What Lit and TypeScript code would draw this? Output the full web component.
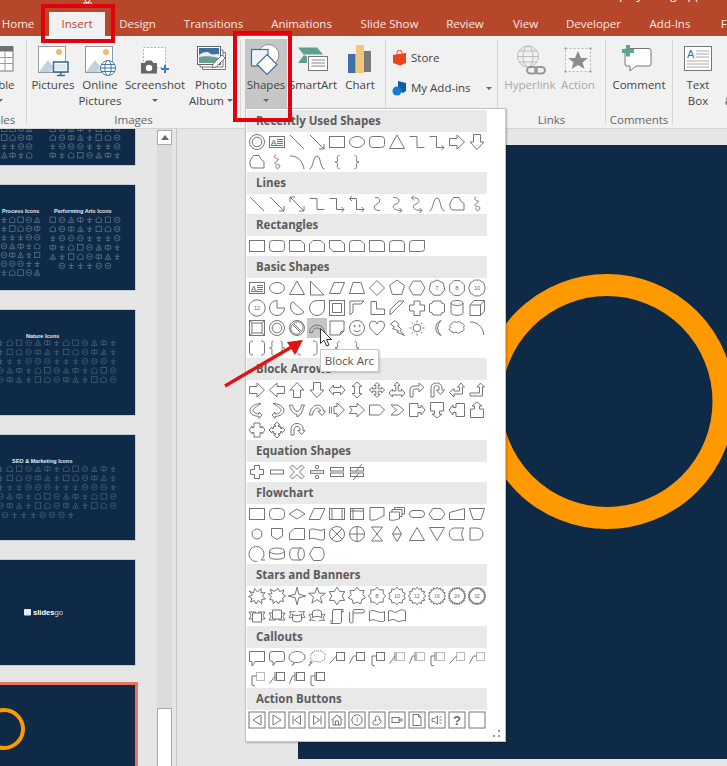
import { LitElement, html, svg, css } from "lit";
import { customElement } from "lit/decorators.js";
import { unsafeSVG } from "lit/directives/unsafe-svg.js";

const p = (d: string) => `<path d="${d}"/>`;
const c = (x: number, y: number, r: number) => `<circle cx="${x}" cy="${y}" r="${r}"/>`;
const R = (x: number, y: number, w: number, h: number, rx = 0) => `<rect x="${x}" y="${y}" width="${w}" height="${h}" rx="${rx}"/>`;
const E = (x: number, y: number, rx: number, ry: number) => `<ellipse cx="${x}" cy="${y}" rx="${rx}" ry="${ry}"/>`;
const rot = (s: string, a: number) => `<g transform="rotate(${a} 10 10)">${s}</g>`;
const fh = (s: string) => `<g transform="translate(20 0) scale(-1 1)">${s}</g>`;
const fv = (s: string) => `<g transform="translate(0 20) scale(1 -1)">${s}</g>`;
const t = (s: string, size = 6, y = 12.2) => `<text class="n" x="10" y="${y}" font-size="${size}">${s}</text>`;
const dash = (s: string) => `<g class="dash">${s}</g>`;
const pts = (n: number, r: number, off = -90, cx = 10, cy = 10) => {
  const a: string[] = [];
  for (let i = 0; i < n; i++) {
    const th = ((off + (360 * i) / n) * Math.PI) / 180;
    a.push(`${(cx + r * Math.cos(th)).toFixed(2)} ${(cy + r * Math.sin(th)).toFixed(2)}`);
  }
  return a;
};
const gon = (n: number, r: number, off = -90) => `<polygon points="${pts(n, r, off).join(" ")}"/>`;
const star = (n: number, ro: number, ri: number) => {
  const o = pts(n, ro);
  const i = pts(n, ri, -90 + 180 / n);
  return `<polygon points="${o.map((v, k) => `${v} ${i[k]}`).join(" ")}"/>`;
};

const donut = c(10, 10, 7.5) + c(10, 10, 4.8);
const textbox = R(2.5, 4.5, 15, 11) + `<text class="b" x="4" y="12.5" font-size="8">A</text>` + p("M10 7.5H16M10 9.5H16M10 11.5H16M4 13.5H16");
const line = p("M3 3L17 17");
const arrow = p("M3 3L17 17M17 12V17H12");
const dblArrow = p("M3 3L17 17M17 12V17H12M3 8V3H8");
const rect = R(2.5, 4.5, 15, 11);
const ell = E(10, 10, 7.5, 5.5);
const rnd = R(2.5, 4.5, 15, 11, 3);
const tri = p("M10 3L17.5 16.5H2.5Z");
const elbow = p("M2.5 4.5H10V15.5H17.5");
const elbowA = p("M2.5 4.5H9.5V15.5H17M14.5 13L17 15.5L14.5 18");
const elbowD = p("M5 2L2.5 4.5L5 7M2.5 4.5H9.5V15.5H17M14.5 13L17 15.5L14.5 18");
const arR = p("M2.5 6.5H10V3L17.5 10L10 17V13.5H2.5Z");
const arL = fh(arR);
const arU = rot(arR, -90);
const arD = rot(arR, 90);
const free = p("M3 9L6.5 3.5H12Q13.5 8 17 9.5V16H6Q2.5 16 3 9Z");
const scrib = p("M9 3C6 4 8 6.5 11 7S6.5 10 8 11.5 14.5 12 12.5 15 9 17 9 13.5");
const arc = p("M3 4C10 3.5 16 9 17 17");
const curve = p("M2.5 17C6 17 6 4 10 4S13 17 17.5 17");
const lbr = p("M12.5 3.5C9.5 3.5 10.5 6 10.5 8S9.5 10 8 10C9.5 10 10.5 10.5 10.5 12.5S9.5 16.5 12.5 16.5");
const rbr = fh(lbr);
const curveC = p("M8 3.5C14 3 14 8 10 10S6 16.5 13 16.5");
const curveA = p("M6 3.5C13 3 14 8 9 10S6 16.5 14.5 16.5M12.5 14L15 16.5L12.5 19");
const curveD = p("M7 1.5L4.5 4L7 6.5M4.5 4C13 3 14 8 9 10S6 16.5 14.5 16.5M12.5 14L15 16.5L12.5 19");

const snip1 = p("M2.5 4.5H14L17.5 8V15.5H2.5Z");
const snip2 = p("M6 4.5H14L17.5 8V15.5H2.5V8Z");
const snipD = p("M2.5 4.5H14L17.5 8V15.5H6L2.5 12Z");
const snipR = p("M5.5 4.5H14L17.5 8V15.5H2.5V7.5Q2.5 4.5 5.5 4.5Z");
const rnd1 = p("M2.5 4.5H14Q17.5 4.5 17.5 8V15.5H2.5Z");
const rnd2 = p("M6 4.5H14Q17.5 4.5 17.5 8V15.5H2.5V8Q2.5 4.5 6 4.5Z");
const rndD = p("M5.5 4.5H17.5V12.5Q17.5 15.5 14.5 15.5H2.5V7.5Q2.5 4.5 5.5 4.5Z");

const rtri = p("M3.5 3V17H17Z");
const para = p("M7 4.5H17.5L13 15.5H2.5Z");
const trap = p("M6 4.5H14L17.5 15.5H2.5Z");
const dia = p("M10 2.5L17.5 10L10 17.5L2.5 10Z");
const pie = p("M10 2.5A7.5 7.5 0 1 0 17.5 10H10Z");
const chord = p("M5.5 3.5A7.5 7.5 0 1 0 17 14Z");
const tear = p("M17.5 2.5H10A7.5 7.5 0 1 0 17.5 10Z");
const frame = R(2.5, 2.5, 15, 15) + R(5.5, 5.5, 9, 9);
const half = p("M3 3H17L14 6H6V14L3 17Z");
const lsh = p("M4 3.5H9.5V11H17.5V16.5H4Z");
const diag = p("M3 17V12L12 3H17Z");
const plus = p("M7 3H13V7H17.5V13H13V17.5H7V13H2.5V7H7Z");
const plaque = p("M6 3H14Q14 6 17.5 6V14Q14 14 14 17H6Q6 14 2.5 14V6Q6 6 6 3Z");
const can = p("M4 5V15C4 18 16 18 16 15V5") + E(10, 5, 6, 2.5);
const cube = p("M3 7H13.5V17.5H3ZM3 7L7 2.5H17.5V13L13.5 17.5M13.5 7L17.5 2.5");
const bevel = R(2.5, 2.5, 15, 15) + R(5, 5, 10, 10) + p("M2.5 2.5L5 5M17.5 2.5L15 5M2.5 17.5L5 15M17.5 17.5L15 15");
const noSym = c(10, 10, 7.5) + p("M6.5 5.5L14.5 13.5A5 5 0 0 0 6.5 5.5ZM5.5 6.5L13.5 14.5A5 5 0 0 1 5.5 6.5Z");
const bArc = p("M2.5 14.5A7.5 7.5 0 0 1 17.5 14.5H14.5A4.5 4.5 0 0 0 5.5 14.5Z");
const fold = p("M3 3H17V13L13 17H3ZM13 17L14 13.5L17 13");
const smile = c(10, 10, 7.5) + c(7.5, 8, 0.7) + c(12.5, 8, 0.7) + p("M6.5 12Q10 15.5 13.5 12");
const heart = p("M10 17C4 12 2.5 9.5 2.5 7A3.8 3.8 0 0 1 10 6A3.8 3.8 0 0 1 17.5 7C17.5 9.5 16 12 10 17Z");
const bolt = p("M8 2.5L12 6.5L10.5 7.5L14.5 11.5L13 12.5L17.5 17.5L10 14L11.5 13L5.5 10.5L7.5 9L3.5 6Z");
const sun = c(10, 10, 3.8) + p("M10 2.5V4.5M10 15.5V17.5M2.5 10H4.5M15.5 10H17.5M4.7 4.7L6.1 6.1M13.9 13.9L15.3 15.3M4.7 15.3L6.1 13.9M13.9 6.1L15.3 4.7");
const moon = p("M14 2.5A8 8 0 0 0 14 17.5A10 10 0 0 1 14 2.5Z");
const cloud = p("M5 6C5 4 8 3 9.5 4.5C11 3 14 3.5 14.5 5.5C17 5.5 18 8 16.5 9.5C18 11.5 16 14 14 13.5C13 15.5 10 15.5 9 14C7 15.5 4.5 14.5 4.5 13C2 13 1.5 10 3.5 9.5C2 8 3 6 5 6Z");
const dblBk = p("M6 3C3.5 3 2.5 4 2.5 6V14C2.5 16 3.5 17 6 17M14 3C16.5 3 17.5 4 17.5 6V14C17.5 16 16.5 17 14 17");
const dblBr = p("M6.5 3C4 3 5 6 5 8S4 10 2.5 10C4 10 5 10.5 5 12.5S4 17 6.5 17M13.5 3C16 3 15 6 15 8S16 10 17.5 10C16 10 15 10.5 15 12.5S16 17 13.5 17");
const lBk = p("M14 3C10 3 10 5 10 7V13C10 15 10 17 14 17");
const rBk = fh(lBk);

const arLR = p("M2 10L6.5 5V7.5H13.5V5L18 10L13.5 15V12.5H6.5V15Z");
const arUD = rot(arLR, 90);
const quad = p("M10 2.5L13 5.5H11.2V8.8H14.5V7L17.5 10L14.5 13V11.2H11.2V14.5H13L10 17.5L7 14.5H8.8V11.2H5.5V13L2.5 10L5.5 7V8.8H8.8V5.5H7Z");
const lru = p("M10 2L13 5.5H11.2V11H14.5V9L18 13L14.5 17V15H5.5V17L2 13L5.5 9V11H8.8V5.5H7Z");
const bent = p("M3 17V10C3 7 5 6 8 6H12V3L17 7.5L12 12V9H8C6.5 9 6 10 6 11V17Z");
const uturn = p("M4 17V8C4 4.5 6.5 3 9.5 3S15 4.5 15 8V10H17.5L13.5 14.5L9.5 10H12V8C12 6 11 5.7 9.5 5.7S7 6 7 8V17Z");
const leftUp = p("M14 3L17.5 7H15.5V14H7V17L2.5 12.5L7 8.5V11H12.5V7H10.5Z");
const bentUp = p("M13.5 3L17.5 7H15.5V16H3V13H12.5V7H10Z");
const curR = p("M14 3.5C8 3.5 3 7 3 10.5S7 16 12 16.5V18.5L15 15L12 12V14C9 14 6 12.5 6 10.5S9 6.5 14 3.5Z");
const curUp = p("M2.5 5C3 11 7 14 10 14.5V17L14 14L17.5 5H14.5C14 9 12 11 10 11.5C7.5 10.5 6 8 5.5 5Z");
const curDn = p("M2.5 15C3 9 7 5 10.5 5S16 8 16.5 11H18.5L15 15.5L11 11H13.5C13 9 12 8 10.5 8S6 10 5.5 15Z");
const stripe = p("M2.5 6.5V13.5M4.5 6.5V13.5M7 6.5H10V3L17.5 10L10 17V13.5H7Z");
const notch = p("M2.5 6.5H10V3L17.5 10L10 17V13.5H2.5L5 10Z");
const home = p("M2.5 5H12.5L17.5 10L12.5 15H2.5Z");
const chev = p("M4 5H11L17 10L11 15H4L9.5 10Z");
const calR = p("M2.5 3.5H11V7.5H14V5L18 10L14 15V12.5H11V16.5H2.5Z");
const calD = rot(calR, 90);
const calL = fh(calR);
const calU = rot(calR, -90);
const calLR = p("M7 3H13V7.5H15V6L18 10L15 14V12.5H13V17H7V12.5H5V14L2 10L5 6V7.5H7Z");
const calQ = p("M10 2L13 5H11.5V6.5H13.5V8.5H15V7L18 10L15 13V11.5H13.5V13.5H11.5V15H13L10 18L7 15H8.5V13.5H6.5V11.5H5V13L2 10L5 7V8.5H6.5V6.5H8.5V5H7Z");
const circ = p("M4 15V10C4 5.5 7 3.5 10 3.5S16 5.5 16 9V10.5H18L14.5 14.5L11 10.5H13V9C13 7.5 11.5 6.5 10 6.5S7 7.5 7 10V15Z");

const eqPlus = p("M7.5 3.5H12.5V7.5H16.5V12.5H12.5V16.5H7.5V12.5H3.5V7.5H7.5Z");
const eqMin = R(3.5, 8, 13, 4);
const eqMul = p("M5.5 3L10 7.5L14.5 3L17 5.5L12.5 10L17 14.5L14.5 17L10 12.5L5.5 17L3 14.5L7.5 10L3 5.5Z");
const eqDiv = c(10, 5, 1.7) + c(10, 15, 1.7) + R(3.5, 8.7, 13, 2.6);
const eqEq = R(3.5, 5.5, 13, 3.5) + R(3.5, 11, 13, 3.5);
const eqNe = R(3.5, 5.5, 13, 3.5) + R(3.5, 11, 13, 3.5) + p("M6 18L12 11M9 9L15 2");

const fProc = R(2.5, 4.5, 15, 11);
const fAlt = R(2.5, 4.5, 15, 11, 4);
const fDec = p("M10 5L18 10L10 15L2 10Z");
const fData = p("M7 4.5H18L13 15.5H2Z");
const fPre = R(2.5, 4.5, 15, 11) + p("M5 4.5V15.5M15 4.5V15.5");
const fInt = R(3.5, 4.5, 13, 11) + p("M6 4.5V15.5M3.5 7H16.5");
const fDoc = p("M3 3.5H17V12C13 12 12 17 3 16Z");
const fMul = p("M2.5 8H12.5V15C9 15 8 17 2.5 16ZM5 8V5.5H15V12.5H12.5M7.5 5.5V3.5H17.5V10H15");
const fTerm = R(2.5, 6.5, 15, 7, 3.5);
const fPrep = p("M6 4.5H14L18 10L14 15.5H6L2 10Z");
const fMan = p("M2.5 8.5L17.5 4.5V15.5H2.5Z");
const fOp = p("M2.5 4.5H17.5L14 15.5H6Z");
const fCon = c(10, 10, 5);
const fOff = p("M4.5 4.5H15.5V12L10 15.5L4.5 12Z");
const fCard = p("M7 4.5H17.5V15.5H2.5V9Z");
const fTape = p("M2.5 6C7 2.5 13 9 17.5 5V15C13 18.5 7 12 2.5 15Z");
const fSum = c(10, 10, 7.5) + p("M4.7 4.7L15.3 15.3M15.3 4.7L4.7 15.3");
const fOr = c(10, 10, 7.5) + p("M10 2.5V17.5M2.5 10H17.5");
const fCol = p("M4.5 3H15.5L4.5 17H15.5Z");
const fSort = p("M10 2.5L14.5 10L10 17.5L5.5 10ZM5.5 10H14.5");
const fExt = p("M10 3.5L17.5 16.5H2.5Z");
const fMer = p("M2.5 3.5H17.5L10 16.5Z");
const fSto = p("M6 4H17C14 7 14 13 17 16H6C1 13 1 7 6 4Z");
const fDel = p("M3 4H10A6 6 0 0 1 10 16H3Z");
const fSeq = p("M10 17.5A7.5 7.5 0 1 1 14 16H18");
const fDisk = p("M2.5 7V13C2.5 16 17.5 16 17.5 13V7") + E(10, 7, 7.5, 3);
const fDir = p("M6 4H14C18.5 4 18.5 16 14 16H6C1.5 16 1.5 4 6 4ZM14 4C10 4 10 16 14 16");
const fDisp = p("M6.5 3.5H13C18.5 3.5 18.5 16.5 13 16.5H6.5L2.5 10Z");

const ex1 = `<polygon points="2 5 6.5 7 7.5 2.5 10.5 6 14 2.5 14 7 18 6.5 15.5 10 18.5 13 14.5 13.5 15 17.5 11 14.5 9 18 7.5 14.5 3.5 16 5 12.5 1.5 10.5 5.5 9"/>`;
const ex2 = `<polygon points="3 3 7 5.5 11 2.5 12.5 5.5 17 4 15.5 8 18.5 10 15.5 12 16.5 15.5 13 15 11.5 18 9.5 15 6 17.5 6 14 2.5 13.5 4.5 10.5 1.5 8 5 7.5"/>`;
const sx = (n: number, ri: number, ro = 8.8) => star(n, ro, ri);
const rib = p("M5.5 4H14.5V13H5.5ZM5.5 7H2L4 10.5L2 14H8.5V13M14.5 7H18L16 10.5L18 14H11.5V13");
const cu1 = p("M5.5 6C5.5 3.5 14.5 3.5 14.5 6V12C14.5 10 5.5 10 5.5 12ZM5.5 9C3 8 2.5 8 2 8.5L4 12L2.5 14.5C5 14 7 14 8.5 15M14.5 9C17 8 17.5 8 18 8.5L16 12L17.5 14.5C15 14 13 14 11.5 15");
const scrollV = p("M6 3.5H16.5Q14.5 3.5 14.5 6V15Q14.5 17.5 12.5 17.5H3.5Q5.5 17.5 5.5 15V6Q5.5 3.5 7 3.5M14.5 5.5H17M5.5 15H3");
const scrollH = p("M2.5 6V15Q2.5 17 4.5 17Q6 17 6 15.5V7H16Q17.5 7 17.5 5.5T16 3.5H14M6 7V5Q6 3.5 8 3.5H15");
const wave = p("M2.5 5.5C7 2 12.5 9 17.5 5.5V15C12.5 18 7 11 2.5 15Z");
const wave2 = p("M1.5 5C5 3 7 8 10 6S15 3 18.5 5V15C15 13 13 17 10 15S5 13 1.5 15Z");

const cRect = p("M2.5 3.5H17.5V13.5H8.5L5 18V13.5H2.5Z");
const cRnd = p("M5 3.5H15Q17.5 3.5 17.5 6V11Q17.5 13.5 15 13.5H9L6 17.5V13.5H5Q2.5 13.5 2.5 11V6Q2.5 3.5 5 3.5Z");
const cOv = p("M7.5 14.5C4 14 2 12 2 9.5C2 6 5.5 3.5 10 3.5S18 6 18 9S14.5 14.5 10 14.5C9 14.5 8.5 14.5 8 14.5L5 17.5Z");
const cCl = `<g class="dash">` + p("M6 4.5C6 3 9 2 10.5 3.5C12 2 15 2.5 15.5 4.5C18 4.5 19 7 17.5 8.5C19 10.5 17 13 15 12.5C14 14.5 11 14.5 10 13C8 14.5 5.5 13.5 5.5 12C3 12 2.5 9 4.5 8.5C3 7 4 4.5 6 4.5Z") + `</g>` + c(4, 14.5, 1) + c(2.5, 17, 0.7);
const box = R(9.5, 4.5, 8, 8);
const dBox = dash(R(9.5, 4.5, 8, 8));
const t1 = p("M9.5 8L2.5 15.5");
const t2 = p("M9.5 8H6.5L2.5 15.5");
const t3 = p("M9.5 8H5V17L8 18");
const bar = p("M8 4V13");
const t1b = p("M8 8L2.5 15.5");
const t2b = p("M8 8H5.5L2.5 15.5");
const t3b = p("M8 8H4V17L7 18");

const ab = (s: string) => R(2, 2, 16, 16) + s;

type Section = [string, string[]];
const SECTIONS: Section[] = [
  ["Recently Used Shapes", [donut, textbox, line, arrow, rect, ell, rnd, tri, elbow, elbowA, arR, arD, free, scrib, arc, curve, lbr, rbr]],
  ["Lines", [line, arrow, dblArrow, elbow, elbowA, elbowD, curveC, curveA, curveD, curve, free, scrib]],
  ["Rectangles", [rect, rnd, snip1, snip2, snipD, snipR, rnd1, rnd2, rndD]],
  ["Basic Shapes", [
    textbox, ell, tri, rtri, para, trap, dia, gon(5, 8), gon(6, 8, 0), gon(7, 8) + t("7"), gon(8, 8, 22.5) + t("8"), gon(10, 8.3, 0) + t("10", 5.5),
    gon(12, 8.3) + t("12", 5.5), pie, chord, tear, frame, half, lsh, diag, plus, plaque, can, cube,
    bevel, donut, noSym, bArc, fold, smile, heart, bolt, sun, moon, cloud, arc,
    dblBk, dblBr, lBk, rBk, lbr, rbr]],
  ["Block Arrows", [
    arR, arL, arU, arD, arLR, arUD, quad, lru, bent, uturn, leftUp, bentUp,
    curR, fh(curR), curUp, curDn, stripe, notch, home, chev, calR, calD, calL, calU,
    calLR, calQ, circ]],
  ["Equation Shapes", [eqPlus, eqMin, eqMul, eqDiv, eqEq, eqNe]],
  ["Flowchart", [
    fProc, fAlt, fDec, fData, fPre, fInt, fDoc, fMul, fTerm, fPrep, fMan, fOp,
    fCon, fOff, fCard, fTape, fSum, fOr, fCol, fSort, fExt, fMer, fSto, fDel,
    fSeq, fDisk, fDir, fDisp]],
  ["Stars and Banners", [
    ex1, ex2, sx(4, 2.5), sx(5, 3.6), sx(6, 5.2), sx(7, 6), sx(8, 6.6) + t("8"), sx(10, 6.8) + t("10", 5.5), sx(12, 6.8) + t("12", 5), sx(16, 7) + t("16", 5), sx(24, 7) + t("24", 5), sx(32, 7) + t("32", 5),
    fv(rib), rib, fv(cu1), cu1, scrollV, scrollH, wave, wave2]],
  ["Callouts", [
    cRect, cRnd, cOv, cCl, box + t1, box + t2, box + t3, dBox + bar + t1b, dBox + bar + t2b, dBox + bar + t3b, dBox + t1, dBox + t2,
    dBox + t3, box + bar + t1b, box + bar + t2b, box + bar + t3b]],
  ["Action Buttons", [
    ab(p("M14 5V15L6 10Z")), ab(p("M6 5V15L14 10Z")), ab(p("M13.5 5.5V14.5L7.5 10ZM6 5.5V14.5")), ab(p("M6.5 5.5V14.5L12.5 10ZM14 5.5V14.5")),
    ab(p("M4.5 10L10 5L15.5 10M6 9V15H14V9M8.5 15V11H11.5V15M13 6V8")), ab(c(10, 10, 5.2) + t("i", 7, 12.4)), ab(p("M6 13Q6 9 9 11Q7 6 10.5 6Q14 7 12 10Q15 9 14 12Q12 16 8 15Q6 15 6 13Z")), ab(R(5, 7.5, 7, 5) + p("M12 9H15V11H12")),
    ab(p("M6 4.5H11.5L14 7V15.5H6ZM11.5 4.5V7H14")), ab(p("M5 8.5V11.5H7.5L10.5 14V6L7.5 8.5ZM12.5 7.5L14.5 6.5M12.5 10H15M12.5 12.5L14.5 13.5")), ab(`<text class="q" x="10" y="15" font-size="13">?</text>`), ab("")]],
];

const gridIcons = (x0: number, y0: number, cols: number, rows: number, sx_: number, sy: number, op: number, last = cols) => {
  let s = `<g class="ti" opacity="${op}">`;
  for (let r = 0; r < rows; r++) {
    const n = r === rows - 1 ? last : cols;
    const off = r === rows - 1 ? ((cols - last) * sx_) / 2 : 0;
    for (let k = 0; k < n; k++) {
      const x = x0 + off + k * sx_;
      const y = y0 + r * sy;
      const v = (k * 7 + r * 5 + (k * r) % 3) % 6;
      if (v === 0) s += `<rect x="${x}" y="${y}" width="5.5" height="5.5"/>`;
      else if (v === 1) s += `<circle cx="${x + 2.8}" cy="${y + 2.8}" r="2.8"/><path d="M${x + 1} ${y + 2.8}H${x + 4.5}"/>`;
      else if (v === 2) s += `<path d="M${x} ${y + 5.5}L${x + 2.8} ${y}L${x + 5.5} ${y + 5.5}ZM${x + 2.8} ${y + 2.5}V${y + 5.5}"/>`;
      else if (v === 3) s += `<path d="M${x} ${y + 1}H${x + 5.5}V${y + 4.5}H${x}ZM${x + 2.8} ${y}V${y + 6}"/>`;
      else if (v === 4) s += `<path d="M${x + 2.8} ${y}V${y + 6}M${x} ${y + 2.5}H${x + 5.5}M${x + 1} ${y + 5}H${x + 4.5}"/>`;
      else s += `<path d="M${x} ${y + 2}L${x + 2.8} ${y}L${x + 5.5} ${y + 2}V${y + 5.5}H${x}Z"/>`;
    }
  }
  return s + "</g>";
};
const title = (x: number, y: number, s: string) => `<text class="tt" x="${x}" y="${y}">${s}</text>`;

const THUMBS: string[] = [
  gridIcons(-40, 66, 9, 4, 8.3, 8.8, 0.6) + gridIcons(50, 66, 8, 4, 9.2, 8.8, 0.6),
  title(2, 28, "Process Icons") + title(54, 28, "Performing Arts Icons") +
    gridIcons(-32, 32, 9, 7, 8.3, 8.8, 0.6) + gridIcons(50, 32, 8, 6, 9.2, 9.2, 0.6, 6),
  title(26, 28, "Nature Icons") + gridIcons(-40, 30, 17, 5, 9.4, 9.2, 0.42),
  title(12, 28, "SEO & Marketing Icons") + gridIcons(-40, 31, 17, 6, 9.4, 9.2, 0.42, 8),
  `<rect class="sg" x="24" y="49" width="7" height="6.5" rx="1"/><text class="sgt" x="33" y="54.5">slides<tspan class="sgl">go</tspan></text>`,
  `<circle class="ring" cx="4" cy="44" r="19"/>`,
];

const icoPic = svg`<rect x="1.5" y="1.5" width="27" height="26" fill="#fff" stroke="#8d9aa3"/><path d="M2 27L11 15L20 27Z" fill="#c3d0de"/><path d="M12 27L18 19L26 27Z" fill="#d7dfe8"/><circle cx="22" cy="7" r="3" fill="#f2b96a"/>`;

@customElement("app-root")
export class AppRoot extends LitElement {
  static styles = css`
    :host { display: block; width: 727px; height: 766px; overflow: hidden; position: relative; background: #e6e6e6; font: 11.5px/16px "Open Sans", "Noto Sans", sans-serif; color: #444; }
    .titlebar { height: 12px; background: #b7472a; display: flex; justify-content: flex-end; overflow: hidden; padding-right: 19px; }
    .titlebar span { color: #fff; font-size: 12px; line-height: 16px; margin-top: -13px; white-space: nowrap; }
    .tabs { height: 24px; background: #b7472a; display: flex; margin-left: -13px; white-space: nowrap; }
    .tab { width: var(--w); text-align: center; line-height: 24px; color: #fbe9e4; flex: none; }
    .tab.active { background: #f1f1f1; color: #c0432a; }

    .ribbon { height: 92px; background: #f1f1f1; display: flex; border-bottom: 1px solid #d4d4d4; box-sizing: content-box; overflow: hidden; }
    .group { display: flex; flex-direction: column; flex: none; box-sizing: border-box; border-right: 1px solid #d6d6d6; margin: 4px 0; height: 84px; }
    .group-body { display: flex; height: 69px; margin-top: -1px; flex: none; }
    .group-label { line-height: 16px; text-align: center; color: #666; white-space: nowrap; margin-top: 4px; }
    .g-tab { width: 27px; overflow-x: clip; }
    .g-img { width: 214px; }
    .g-ill { width: 145px; }
    .g-add { width: 112px; }
    .g-lnk { width: 108px; }
    .g-com { width: 67px; }
    .g-txt { width: 54px; border-right: none; }
    .g-tab .group-label { margin-left: -22px; width: 40px; }
    .g-img .group-body { padding-left: 4px; }
    .g-ill .group-body { padding-left: 4px; }
    .g-lnk .group-body { padding-left: 6px; }
    .g-txt .group-body { padding-left: 2px; }

    .btn { display: flex; flex-direction: column; align-items: center; flex: none; text-align: center; line-height: 16px; color: #444; white-space: nowrap; padding-top: 2px; box-sizing: border-box; }
    .btn .ic { height: 36px; display: flex; align-items: flex-end; justify-content: center; flex: none; }
    .btn svg { display: block; }
    .caret { width: 0; height: 0; border: 3px solid transparent; border-top: 3px solid #666; border-bottom: none; margin: 6px auto 0; display: block; }
    .caret.inline { display: inline-block; margin: 0 0 2px 3px; vertical-align: middle; }
    .w-t { width: 28px; margin-left: -14px; }
    .w-pic { width: 44px; } .w-onl { width: 50px; } .w-scr { width: 60px; } .w-alb { width: 52px; }
    .w-sha { width: 42px; background: #c6c6c6; height: 69px; margin-right: 2px; }
    .w-sma { width: 48px; } .w-cha { width: 46px; }
    .w-hyp { width: 52px; color: #a9a9a9; } .w-act { width: 44px; color: #a9a9a9; }
    .w-com { width: 66px; } .w-txt { width: 46px; } .w-hf { width: 54px; }
    .addins { display: flex; flex-direction: column; padding: 11px 0 0 6px; gap: 14px; }
    .addrow { display: flex; align-items: center; gap: 4px; height: 16px; white-space: nowrap; }
    .addrow .caret { margin: 0 0 0 11px; }

    .work { display: flex; height: 637px; }
    .panel { width: 177px; flex: none; box-sizing: border-box; display: flex; border-right: 1px solid #c6c6c6; overflow: hidden; }
    .thumbs { width: 157px; flex: none; display: flex; flex-direction: column; gap: 20px; margin-top: -69px; }
    .thumb { width: 135px; height: 105px; flex: none; background: #0f2a47; outline: 1px solid #c5ccd2; overflow: hidden; }
    .thumb.sel { outline: 3px solid #e8735f; }
    .thumb svg { display: block; width: 185px; height: 105px; margin-left: -50px; }
    .ti { fill: none; stroke: #b7c7d6; stroke-width: .6; }
    .tt { fill: #e4ecf3; font: bold 5.5px "Liberation Sans", sans-serif; }
    .sg { fill: #e4ecf3; }
    .sgt { fill: #fff; font: bold 7.6px "Liberation Sans", sans-serif; }
    .sgl { font-weight: normal; fill: #cfd8e0; }
    .ring { fill: none; stroke: #ff9900; stroke-width: 4; }
    .scroll { width: 15px; flex: none; background: #dcdcdc; display: flex; flex-direction: column; justify-content: space-between; box-sizing: border-box; padding-top: 1px; }
    .sbtn { height: 15px; background: #fff; border: 1px solid #ababab; box-sizing: border-box; display: flex; align-items: center; justify-content: center; }
    .sbtn i { width: 0; height: 0; border: 4px solid transparent; border-bottom: 5px solid #666; border-top: none; display: block; }
    .sthumb { height: 58px; background: #fff; border: 1px solid #ababab; border-bottom: none; box-sizing: border-box; }
    .stage { flex: 1; min-width: 0; padding: 16px 0 7px 121px; box-sizing: border-box; }
    .slide { height: 100%; background: #0f2a47; overflow: hidden; }
    .slide svg { display: block; width: 429px; height: 614px; }
    .big { fill: none; stroke: #ff9900; stroke-width: 22; }

    .popup { position: absolute; left: 245px; top: 108px; width: 261px; height: 634px; box-sizing: border-box; background: #fff; border: 1px solid #c4c4c4; box-shadow: 1px 1px 2px rgba(0,0,0,.25); padding: 1px 0 0 1px; }
    .head { width: 240px; height: 22px; line-height: 22px; background: #e9e9e9; padding-left: 9px; box-sizing: border-box; font-weight: 700; color: #5c5c5c; white-space: nowrap; overflow: hidden; }
    .gal { display: grid; grid-template-columns: repeat(12, 20px); grid-auto-rows: 20px; width: 240px; }
    .cell { width: 20px; height: 20px; }
    .cell.hot { background: #c6c6c6; }
    .shape { display: block; fill: none; stroke: #757575; stroke-width: 1; }
    .shape .n, .shape .q { fill: #6a6a6a; stroke: none; text-anchor: middle; font-family: "Liberation Sans", sans-serif; }
    .shape .q { font-weight: 700; }
    .shape .b { fill: #2f74b5; stroke: none; font-family: "Liberation Sans", sans-serif; }
    .shape .dash { stroke-dasharray: 1 1; }
    .grip { position: absolute; right: 4px; bottom: 3px; display: block; }

    .tip { position: absolute; left: 320px; top: 349px; width: 59px; height: 23px; box-sizing: border-box; background: #fff; border: 1px solid #c8c8c8; box-shadow: 1px 1px 2px rgba(0,0,0,.2); line-height: 21px; text-align: center; color: #555; white-space: nowrap; }
    .cursor { position: absolute; left: 320px; top: 328px; display: block; }
    .mark { position: absolute; border: 4px solid #e2000f; box-sizing: border-box; }
    .m-ins { left: 41px; top: 4px; width: 74px; height: 39px; }
    .m-sha { left: 233px; top: 31px; width: 59px; height: 91px; }
    .redarrow { position: absolute; left: 220px; top: 335px; display: block; }
    .tick { position: absolute; left: 83px; top: 0; display: block; }
  `;

  private renderSection([name, items]: Section) {
    return html`<div class="head">${name}</div>
      <div class="gal">
        ${items.map((s) => html`<div class="cell ${s === bArc ? "hot" : ""}"><svg class="shape" width="20" height="20" viewBox="0 0 20 20">${unsafeSVG(s)}</svg></div>`)}
      </div>`;
  }

  render() {
    const tabs: [string, number][] = [["Home", 62], ["Insert", 56], ["Design", 65], ["Transitions", 87], ["Animations", 89], ["Slide Show", 87], ["Review", 64], ["View", 57], ["Developer", 79], ["Add-Ins", 74], ["Format", 66]];
    return html`
      <div class="titlebar"><span>Display Using Apps</span></div>
      <div class="tabs">
        ${tabs.map(([n, w]) => html`<div class="tab ${n === "Insert" ? "active" : ""}" style="--w:${w}px">${n}</div>`)}
      </div>
      <div class="ribbon">
        <div class="group g-tab">
          <div class="group-body">
            <div class="btn w-t">
              <div class="ic"><svg width="28" height="32" viewBox="0 0 28 32"><rect x="1" y="1.5" width="26" height="24.5" fill="#fff" stroke="#777"/><rect x="1" y="1.5" width="26" height="5" fill="#707070"/><path d="M1 12.5H27M1 18.5H27M10 6V26M19 6V26" stroke="#999" fill="none"/></svg></div>
              <div>Table</div><i class="caret"></i>
            </div>
          </div>
          <div class="group-label">Tables</div>
        </div>

        <div class="group g-img">
          <div class="group-body">
            <div class="btn w-pic"><div class="ic"><svg width="32" height="32" viewBox="0 0 32 32">${icoPic}<rect x="16.5" y="17" width="14.5" height="10" fill="#fff" stroke="#3b6f8f" stroke-width="1.6"/><rect x="18" y="19" width="11.5" height="6.5" fill="#dfe8ee"/><path d="M23.7 27V30M20 30.5H28" stroke="#3b6f8f" stroke-width="1.5"/></svg></div><div>Pictures</div></div>
            <div class="btn w-onl"><div class="ic"><svg width="32" height="32" viewBox="0 0 32 32">${icoPic}<g fill="#fff" stroke="#3f7ba8"><circle cx="24" cy="23" r="7.5"/><ellipse cx="24" cy="23" rx="3.2" ry="7.5"/><path d="M16.5 23H31.5M17.5 19.5H30.5M17.5 26.5H30.5" fill="none"/></g></svg></div><div>Online<br />Pictures</div></div>
            <div class="btn w-scr"><div class="ic"><svg width="34" height="32" viewBox="0 0 34 32"><rect x="5.5" y="2.5" width="22" height="20" fill="#fff" stroke="#b5b5b5" stroke-dasharray="2 1.5"/><path d="M3 18H6.5L8.5 15.5H13.5L15.5 18H19V28.5H3Z" fill="#666"/><circle cx="11" cy="23" r="3.2" fill="#fff"/><path d="M27 20V28M23 24H31" stroke="#3e7fb5" stroke-width="2"/></svg></div><div>Screenshot</div><i class="caret"></i></div>
            <div class="btn w-alb"><div class="ic"><svg width="34" height="32" viewBox="0 0 34 32"><path d="M8.5 7.5H31.5V24.5H8.5Z" fill="#fff" stroke="#777"/><path d="M6 5H29V22H6Z" fill="#fff" stroke="#777"/><rect x="3.5" y="1.5" width="23" height="18" fill="#fff" stroke="#666"/><rect x="5" y="3" width="20" height="7" fill="#3e6f9e"/><path d="M5 10C9 7 13 6 16 8.5S22 8 25 9.5V12H5Z" fill="#e8eef3"/><path d="M5 12C10 11 18 11 25 13V18H5Z" fill="#67a08f"/><path d="M28 10L19.5 18.5L18 23L22.5 21.5L31 13Z" fill="#fff" stroke="#777"/></svg></div><div>Photo</div><div>Album<i class="caret inline"></i></div></div>
          </div>
          <div class="group-label">Images</div>
        </div>

        <div class="group g-ill">
          <div class="group-body">
            <div class="btn w-sha"><div class="ic"><svg width="36" height="34" viewBox="0 0 36 34"><circle cx="20.5" cy="12" r="10.5" fill="#fff" stroke="#8a8a8a"/><rect x="3.5" y="6.5" width="16.5" height="16.5" fill="#eef2f6" stroke="#456f99" stroke-width="1.2"/><path d="M19 11.5L29 21.5L19 31.5L9 21.5Z" fill="#fff" stroke="#456f99" stroke-width="1.2"/></svg></div><div>Shapes</div><i class="caret"></i></div>
            <div class="btn w-sma"><div class="ic"><svg width="34" height="32" viewBox="0 0 34 32"><path d="M2 2.5H21L27 9.5H7L11 11.5V18H2L8 10Z" fill="#5f9f90"/><rect x="12.5" y="11.5" width="19" height="14" fill="#fff" stroke="#777"/><path d="M15.5 15H29M15.5 18H29M15.5 21H29" stroke="#888"/></svg></div><div>SmartArt</div></div>
            <div class="btn w-cha"><div class="ic"><svg width="30" height="32" viewBox="0 0 30 32"><rect x="3" y="9" width="7.5" height="19" fill="#3d70a8"/><rect x="11" y="0" width="8" height="28" fill="#f2c77c"/><rect x="19" y="6" width="7" height="21" fill="#7a7a7a"/></svg></div><div>Chart</div></div>
          </div>
        </div>

        <div class="group g-add">
          <div class="group-body">
            <div class="addins">
              <div class="addrow"><svg width="15" height="16" viewBox="0 0 15 16"><path d="M1 5L14 3V13L8 15.5L1 13Z" fill="#e8431a"/><path d="M5 5V2.5A2.5 2.2 0 0 1 10 2.5V4" stroke="#e8431a" fill="none"/></svg><span>Store</span></div>
              <div class="addrow"><svg width="15" height="16" viewBox="0 0 15 16"><path d="M6 1L14 3V11L11 13L6 10Z" fill="#0c5ea8"/><circle cx="5" cy="11" r="4.5" fill="#1579d6"/></svg><span>My Add-ins</span><i class="caret"></i></div>
            </div>
          </div>
        </div>

        <div class="group g-lnk">
          <div class="group-body">
            <div class="btn w-hyp"><div class="ic"><svg width="34" height="32" viewBox="0 0 34 32"><g fill="none" stroke="#bdbdbd"><circle cx="15" cy="11.5" r="10.5"/><ellipse cx="15" cy="11.5" rx="5" ry="10.5"/><path d="M4.5 11.5H25.5M6 6H24M6 17H24"/></g><g fill="none" stroke="#9a9a9a" stroke-width="2"><rect x="14" y="22" width="10" height="6.5" rx="3.2"/><rect x="22" y="22" width="10" height="6.5" rx="3.2"/></g></svg></div><div>Hyperlink</div></div>
            <div class="btn w-act"><div class="ic"><svg width="30" height="30" viewBox="0 0 30 30"><rect x="2.5" y="1.5" width="25" height="23" fill="#f7f7f7" stroke="#b5b5b5" stroke-dasharray="2 2"/><path d="M15 4L18 11H25L19.5 15.5L21.5 22L15 18L8.5 22L10.5 15.5L5 11H12Z" fill="#8d8d8d"/><path d="M1.5 1.5H3.5M26.5 1.5H28.5M1.5 24.5H3.5M26.5 24.5H28.5" stroke="#999" stroke-width="2"/></svg></div><div>Action</div></div>
          </div>
          <div class="group-label">Links</div>
        </div>

        <div class="group g-com">
          <div class="group-body">
            <div class="btn w-com"><div class="ic"><svg width="34" height="32" viewBox="0 0 34 32"><path d="M5 3.5H27Q29 3.5 29 5.5V19Q29 21 27 21H14L8 26V21H5Q3 21 3 19V5.5Q3 3.5 5 3.5Z" fill="#fff" stroke="#777"/><path d="M4 0H8V4H12V8H8V11.5H4V8H0V4H4Z" fill="#5ea393"/></svg></div><div>Comment</div></div>
          </div>
          <div class="group-label">Comments</div>
        </div>

        <div class="group g-txt">
          <div class="group-body">
            <div class="btn w-txt"><div class="ic"><svg width="30" height="32" viewBox="0 0 30 32"><rect x="1.5" y="1.5" width="27" height="24" fill="#fff" stroke="#777"/><text x="4" y="13" font-size="11" fill="#2f74b5" font-family="Liberation Sans">A</text><path d="M13 6H26M13 9H26M13 12H26M4 16H26M4 19H26M4 22H26" stroke="#aaa"/></svg></div><div>Text<br />Box</div></div>
            <div class="btn w-hf"><div class="ic"></div><div>Header<br />&amp; Footer</div></div>
          </div>
        </div>
      </div>

      <div class="work">
        <div class="panel">
          <div class="thumbs">
            ${THUMBS.map((s, i) => html`<div class="thumb ${i === 5 ? "sel" : ""}"><svg viewBox="-50 0 185 105">${unsafeSVG(s)}</svg></div>`)}
          </div>
          <div class="scroll">
            <div class="sbtn"><i></i></div>
            <div class="sthumb"></div>
          </div>
        </div>
        <div class="stage">
          <div class="slide"><svg viewBox="0 0 429 614"><circle class="big" cx="309" cy="256.5" r="116.5"/></svg></div>
        </div>
      </div>

      <div class="popup">
        ${SECTIONS.map((s) => this.renderSection(s))}
        <svg class="grip" width="8" height="8" viewBox="0 0 8 8"><path d="M5 0h2v2H5zM0 5h2v2H0zM5 5h2v2H5z" fill="#9a9a9a"/></svg>
      </div>
      <div class="tip">Block Arc</div>
      <svg class="cursor" width="14" height="20" viewBox="0 0 14 20"><path d="M.5 .5V15.5L4 12.2L6.6 18L9 17L6.5 11.5H11.5Z" fill="#fff" stroke="#333"/></svg>
      <svg class="redarrow" width="90" height="56" viewBox="220 335 90 56"><path d="M225 386L295 345" stroke="#e01414" stroke-width="3.5"/><path d="M303 340L287 342L295 355Z" fill="#e01414"/></svg>
      <div class="mark m-ins"></div>
      <div class="mark m-sha"></div>
      <svg class="tick" width="10" height="4" viewBox="0 0 10 4"><path d="M0 3H9M2 0L4 3M7 0L5 3" stroke="#fff" fill="none"/></svg>
    `;
  }
}
